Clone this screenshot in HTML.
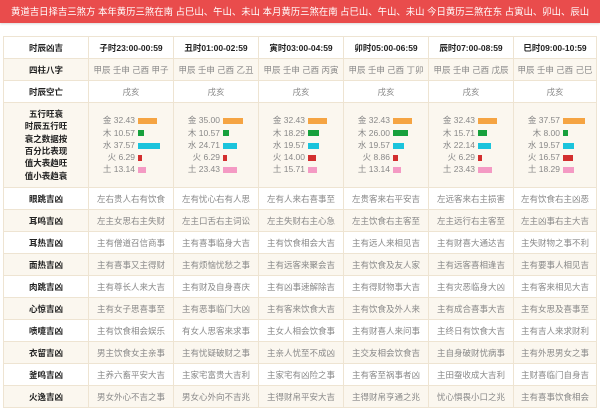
<!DOCTYPE html>
<html><head><meta charset="utf-8"><style>
*{margin:0;padding:0;box-sizing:border-box}
body{width:600px;height:400px;overflow:hidden;background:#fff;font-family:"Liberation Sans","Noto Sans CJK SC",sans-serif}
.top{position:absolute;left:0;top:0;width:600px;height:23px;background:#e94c4c;color:#fff;font-size:9.4px;line-height:23px;padding-left:11px;white-space:nowrap;overflow:hidden;box-shadow:0 1px 2px rgba(0,0,0,.15)}
table{position:absolute;left:3px;top:36px;border-collapse:collapse;table-layout:fixed;width:593px}
tr{height:22px}
td{border:1px solid #eee4d2;text-align:center;font-size:8.5px;line-height:10px;color:#888;white-space:nowrap;overflow:hidden;padding:0}
td.h{color:#222;font-weight:bold}
tr.b td{background:#fbf7ef}
tr.hd td{color:#222;font-weight:bold}
tr.wx{height:85px}
.l{display:block;text-align:left;height:12.3px;line-height:12.3px;font-size:8.5px}
.l span{display:inline-block;width:46px;text-align:right;margin-right:3px}
.l i{display:inline-block;height:6px;vertical-align:middle}
.o{background:#f5a443}.g{background:#17a03c}.c{background:#1bc4dc}.r{background:#d32f2f}.p{background:#f49ac4}
.lab{line-height:12.3px;font-size:8.5px}
</style></head><body>
<div class="top">黄道吉日择吉三煞方 本年黄历三煞在南 占巳山、午山、未山 本月黄历三煞在南 占巳山、午山、未山 今日黄历三煞在东 占寅山、卯山、辰山</div>
<table>
<colgroup><col style="width:85px"><col style="width:85px"><col style="width:85px"><col style="width:85px"><col style="width:85px"><col style="width:85px"><col style="width:83px"></colgroup>
<tr class="hd"><td>时辰凶吉</td><td>子时23:00-00:59</td><td>丑时01:00-02:59</td><td>寅时03:00-04:59</td><td>卯时05:00-06:59</td><td>辰时07:00-08:59</td><td>巳时09:00-10:59</td></tr>
<tr class="b"><td class="h">四柱八字</td><td>甲辰 壬申 己酉 甲子</td><td>甲辰 壬申 己酉 乙丑</td><td>甲辰 壬申 己酉 丙寅</td><td>甲辰 壬申 己酉 丁卯</td><td>甲辰 壬申 己酉 戊辰</td><td>甲辰 壬申 己酉 己巳</td></tr>
<tr><td class="h">时辰空亡</td><td>戌亥</td><td>戌亥</td><td>戌亥</td><td>戌亥</td><td>戌亥</td><td>戌亥</td></tr>
<tr class="b wx"><td class="h"><div class="lab">五行旺衰<br>时辰五行旺<br>衰之数据按<br>百分比表现<br>值大表趋旺<br>值小表趋衰</div></td>
<td><div class="l"><span>金 32.43</span><i class="o" style="width:19px"></i></div><div class="l"><span>木 10.57</span><i class="g" style="width:6px"></i></div><div class="l"><span>水 37.57</span><i class="c" style="width:22px"></i></div><div class="l"><span>火 6.29</span><i class="r" style="width:4px"></i></div><div class="l"><span>土 13.14</span><i class="p" style="width:8px"></i></div></td>
<td><div class="l"><span>金 35.00</span><i class="o" style="width:20px"></i></div><div class="l"><span>木 10.57</span><i class="g" style="width:6px"></i></div><div class="l"><span>水 24.71</span><i class="c" style="width:14px"></i></div><div class="l"><span>火 6.29</span><i class="r" style="width:4px"></i></div><div class="l"><span>土 23.43</span><i class="p" style="width:14px"></i></div></td>
<td><div class="l"><span>金 32.43</span><i class="o" style="width:19px"></i></div><div class="l"><span>木 18.29</span><i class="g" style="width:11px"></i></div><div class="l"><span>水 19.57</span><i class="c" style="width:11px"></i></div><div class="l"><span>火 14.00</span><i class="r" style="width:8px"></i></div><div class="l"><span>土 15.71</span><i class="p" style="width:9px"></i></div></td>
<td><div class="l"><span>金 32.43</span><i class="o" style="width:19px"></i></div><div class="l"><span>木 26.00</span><i class="g" style="width:15px"></i></div><div class="l"><span>水 19.57</span><i class="c" style="width:11px"></i></div><div class="l"><span>火 8.86</span><i class="r" style="width:5px"></i></div><div class="l"><span>土 13.14</span><i class="p" style="width:8px"></i></div></td>
<td><div class="l"><span>金 32.43</span><i class="o" style="width:19px"></i></div><div class="l"><span>木 15.71</span><i class="g" style="width:9px"></i></div><div class="l"><span>水 22.14</span><i class="c" style="width:13px"></i></div><div class="l"><span>火 6.29</span><i class="r" style="width:4px"></i></div><div class="l"><span>土 23.43</span><i class="p" style="width:14px"></i></div></td>
<td><div class="l"><span>金 37.57</span><i class="o" style="width:22px"></i></div><div class="l"><span>木 8.00</span><i class="g" style="width:5px"></i></div><div class="l"><span>水 19.57</span><i class="c" style="width:11px"></i></div><div class="l"><span>火 16.57</span><i class="r" style="width:10px"></i></div><div class="l"><span>土 18.29</span><i class="p" style="width:11px"></i></div></td></tr>
<tr><td class="h">眼跳吉凶</td><td>左右贵人右有饮食</td><td>左有忧心右有人思</td><td>左有人来右喜事至</td><td>左贵客来右平安吉</td><td>左远客来右主损害</td><td>左有饮食右主凶恶</td></tr>
<tr class="b"><td class="h">耳鸣吉凶</td><td>左主女思右主失财</td><td>左主口舌右主词讼</td><td>左主失财右主心急</td><td>左主饮食右主客至</td><td>左主远行右主客至</td><td>左主凶事右主大吉</td></tr>
<tr><td class="h">耳热吉凶</td><td>主有僧道召信商事</td><td>主有喜事临身大吉</td><td>主有饮食相会大吉</td><td>主有远人来相见吉</td><td>主有财喜大通达吉</td><td>主失财物之事不利</td></tr>
<tr class="b"><td class="h">面热吉凶</td><td>主有喜事又主得财</td><td>主有烦恼忧愁之事</td><td>主有远客来聚会吉</td><td>主有饮食及友人家</td><td>主有远客喜相逢吉</td><td>主有要事人相见吉</td></tr>
<tr><td class="h">肉跳吉凶</td><td>主有尊长人来大吉</td><td>主有财及自身喜庆</td><td>主有凶事速解除吉</td><td>主有得财物事大吉</td><td>主有灾恶临身大凶</td><td>主有客来相见大吉</td></tr>
<tr class="b"><td class="h">心惊吉凶</td><td>主有女子思喜事至</td><td>主有恶事临门大凶</td><td>主有客来饮食大吉</td><td>主有饮食及外人来</td><td>主有成合喜事大吉</td><td>主有女思及喜事至</td></tr>
<tr><td class="h">喷嚏吉凶</td><td>主有饮食相会娱乐</td><td>有女人思客来求事</td><td>主女人相会饮食事</td><td>主有财喜人来问事</td><td>主终日有饮食大吉</td><td>主有吉人来求财利</td></tr>
<tr class="b"><td class="h">衣留吉凶</td><td>男主饮食女主亲事</td><td>主有忧疑破财之事</td><td>主亲人忧至不成凶</td><td>主交友相会饮食吉</td><td>主自身破财忧病事</td><td>主有外思男女之事</td></tr>
<tr><td class="h">釜鸣吉凶</td><td>主养六畜平安大吉</td><td>主家宅富贵大吉利</td><td>主家宅有凶险之事</td><td>主有客至祸事者凶</td><td>主田蚕收成大吉利</td><td>主财喜临门自身吉</td></tr>
<tr class="b"><td class="h">火逸吉凶</td><td>男女外心不吉之事</td><td>男女心外向不吉兆</td><td>主得财帛平安大吉</td><td>主得财帛亨通之兆</td><td>忧心惧畏小口之兆</td><td>主有喜事饮食相会</td></tr>
</table>
</body></html>
